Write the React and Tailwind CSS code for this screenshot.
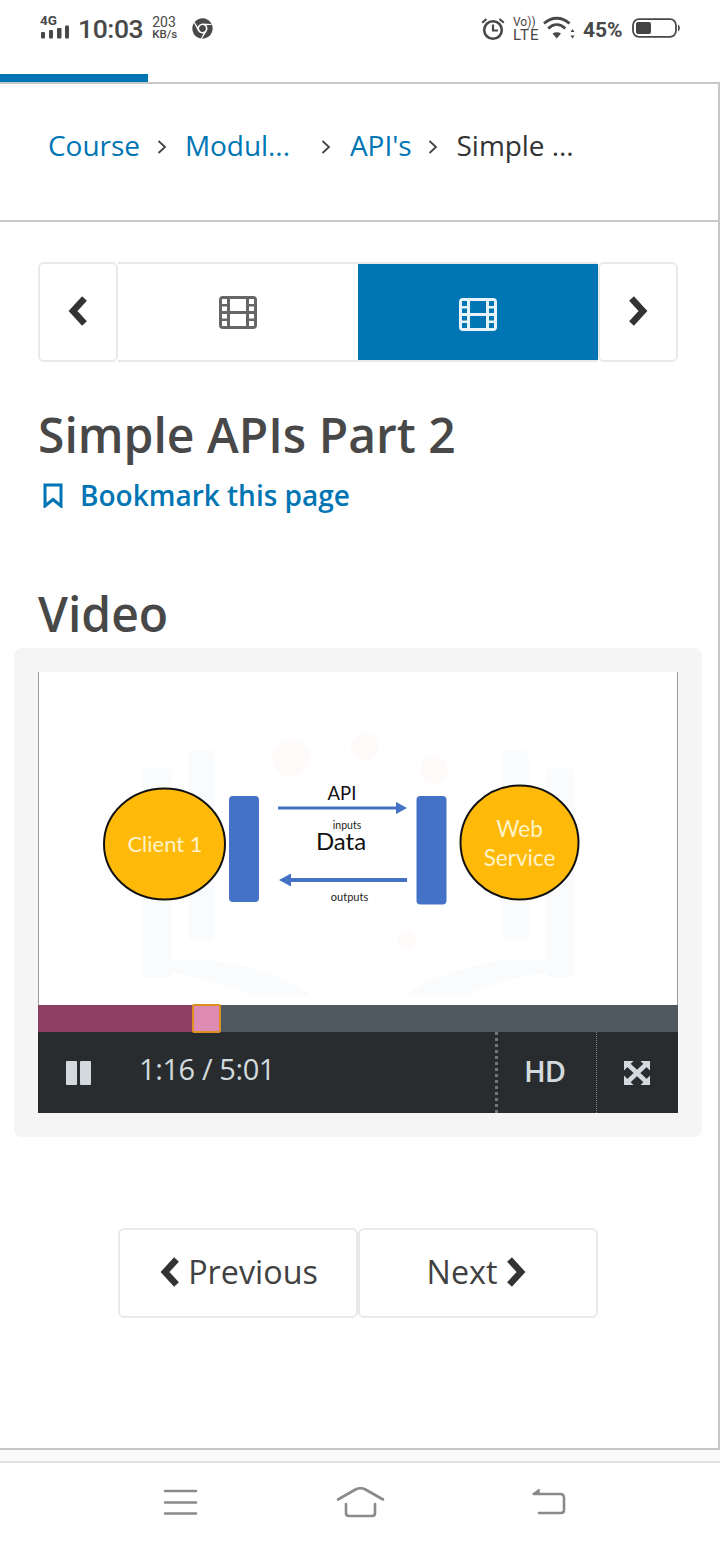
import React from "react";
import { FaChrome } from "react-icons/fa";

function Signal() {
  return (
    <svg width="30" height="14" viewBox="0 0 30 14" className="block">
      <rect x="1" y="7" width="4" height="6.500" rx="1" fill="#484848" />
      <rect x="9" y="5" width="4" height="8.500" rx="1" fill="#484848" />
      <rect x="17" y="3" width="4.500" height="10.500" rx="1" fill="#484848" />
      <rect x="25" y="0.500" width="4" height="13" rx="1" fill="#484848" />
    </svg>
  );
}

function Alarm() {
  return (
    <svg width="24" height="24" viewBox="0 0 24 24" fill="none" stroke="#484848" strokeWidth="2.600">
      <circle cx="12" cy="13" r="8.800" />
      <path d="M12 7.500v6h5" strokeWidth="2.200" />
      <path d="M1.200 5.800 5.500 2M22.800 5.800 18.500 2" strokeWidth="2.200" />
    </svg>
  );
}

function Wifi() {
  return (
    <svg width="32" height="24" viewBox="0 0 32 24" fill="none" stroke="#484848" strokeWidth="2.800">
      <path d="M1 7.500C8.500 0.500 19 0.500 26.500 7.500" />
      <path d="M5.200 12.500C10.500 7.300 17 7.300 22.300 12.500" />
      <path d="M9.500 17.500 13.750 22.500 18 17.500c-2.500-1.800-6-1.800-8.500 0z" fill="#484848" stroke="none" />
      <path d="M29.500 13 31.500 16h-4zM29.500 22.500 27.500 19.500h4z" fill="#484848" stroke="none" />
    </svg>
  );
}

function Battery() {
  return (
    <svg width="48" height="20" viewBox="0 0 48 20" fill="none">
      <rect x="1" y="1.200" width="43" height="17.600" rx="6" stroke="#484848" strokeWidth="1.800" />
      <rect x="4" y="4" width="15" height="12" rx="2" fill="#444" />
      <path d="M46 6.500c1.400.8 1.800 2 1.800 3.500s-.4 2.700-1.800 3.500z" fill="#484848" />
    </svg>
  );
}

function StatusBar() {
  return (
    <div className="flex h-[74px] items-start justify-between pt-[13px] pl-[40px] pr-[40px] text-[#484848] font-['Roboto',sans-serif]">
      <div className="flex items-start">
        <div className="flex w-[30px] flex-col">
          <span className="text-[13.500px] font-bold leading-[13px] h-[12px] mt-[1px]">4G</span>
          <span className="mt-[-1px]"><Signal /></span>
        </div>
        <span className="ml-[8px] mt-[1px] text-[26.500px] font-medium leading-[30px] tracking-[-0.4px]">10:03</span>
        <div className="ml-[9px] mt-[3px] flex flex-col">
          <span className="text-[14px] leading-[12px]">203</span>
          <span className="text-[11.500px] font-medium leading-[13px]">KB/s</span>
        </div>
        <FaChrome className="ml-[15px] mt-[5px] text-[21px] text-[#484848]" />
      </div>
      <div className="flex items-start">
        <span className="mt-[4px] h-[24px] w-[24px]"><Alarm /></span>
        <div className="ml-[8px] mt-[3px] flex w-[25px] flex-col">
          <span className="text-[12px] leading-[12px] h-[12px] whitespace-nowrap">Vo))</span>
          <span className="text-[15px] leading-[14px] tracking-[1px]">LTE</span>
        </div>
        <span className="ml-[5px] mt-[3px] h-[24px] w-[32px]"><Wifi /></span>
        <span className="ml-[8px] mt-[2px] w-[41px] whitespace-nowrap text-[21px] font-bold leading-[30px] text-[#484848]">45%</span>
        <span className="ml-[8px] mt-[5px] h-[20px] w-[48px]"><Battery /></span>
      </div>
    </div>
  );
}

function Crumb({ children, dark, className = "" }) {
  return <span className={`whitespace-nowrap ${dark ? "text-[#333]" : "text-[#0075b4]"} ${className}`}>{children}</span>;
}

function Sep({ className = "" }) {
  return (
    <svg width="10" height="16" viewBox="0 0 10 16" fill="none" stroke="#444" strokeWidth="1.800" className={className}>
      <path d="M1.500 2 8 8 1.500 14" />
    </svg>
  );
}

function Breadcrumbs() {
  return (
    <nav className="flex h-[136px] items-center pl-[48px] pb-[14px] text-[28px] leading-[38px] tracking-[-0.05px]">
      <Crumb>Course</Crumb>
      <Sep className="ml-[17px] mt-[4px]" />
      <Crumb className="ml-[18px]">Modul...</Crumb>
      <Sep className="ml-[31px] mt-[4px]" />
      <Crumb className="ml-[19px]">API's</Crumb>
      <Sep className="ml-[16px] mt-[4px]" />
      <Crumb dark className="ml-[19px]">Simple ...</Crumb>
    </nav>
  );
}

function Film({ color }) {
  return (
    <svg width="38" height="33" viewBox="0 0 38 33" className="block">
      <path
        fillRule="evenodd"
        fill={color}
        d="M4 0h30a4 4 0 0 1 4 4v25a4 4 0 0 1-4 4H4a4 4 0 0 1-4-4V4a4 4 0 0 1 4-4zM3 3v5h5V3zM3 10.500v4.500h5v-4.500zM3 18v4.500h5V18zM3 25v5h5v-5zM30 3v5h5V3zM30 10.500v4.500h5v-4.500zM30 18v4.500h5V18zM30 25v5h5v-5zM11 3v12h16V3zM11 18v12h16V18z"
      />
    </svg>
  );
}

function Chevron({ left, className = "" }) {
  return (
    <svg width="20" height="30" viewBox="0 0 20 30" fill="none" stroke="#333" strokeWidth="6.500" className={`block ${className}`}>
      <path d={left ? "M16.500 2.500 5 15l11.500 12.500" : "M3.500 2.500 15 15 3.500 27.500"} />
    </svg>
  );
}

function UnitNav() {
  return (
    <div className="flex h-[100px] w-[640px]">
      <div className="flex w-[80px] items-center justify-center rounded-[6px] border-2 border-[#e9e9e9] pb-[2px]">
        <Chevron left />
      </div>
      <div className="flex w-[240px] items-center justify-center border-y-2 border-[#e9e9e9] pt-[1px]">
        <Film color="#666" />
      </div>
      <div className="flex w-[240px] items-center justify-center border-y-2 border-[#e9e9e9] bg-[#0075b4] pt-[5px]">
        <Film color="#e6f3fa" />
      </div>
      <div className="flex w-[80px] items-center justify-center rounded-[6px] border-2 border-[#e9e9e9] pb-[2px]">
        <Chevron />
      </div>
    </div>
  );
}

function Diagram() {
  return (
    <svg viewBox="39 672 638 333" className="block h-[333px] w-full bg-white font-['Lato',sans-serif]">
      <g fill="#fafbfd">
        <rect x="142" y="768" width="30" height="210" rx="6" />
        <rect x="188" y="750" width="27" height="190" rx="6" />
        <rect x="502" y="750" width="27" height="190" rx="6" />
        <rect x="546" y="768" width="28" height="210" rx="6" />
        <path d="M142 960h70c40 6 80 20 100 36h-60c-30-14-70-24-110-26z" />
        <path d="M574 960h-70c-40 6-80 20-100 36h60c30-14 70-24 110-26z" />
      </g>
      <g fill="#fefafa">
        <circle cx="291" cy="758" r="19" />
        <circle cx="365" cy="747" r="14" />
        <circle cx="434" cy="770" r="14" />
        <circle cx="407" cy="940" r="10" />
      </g>
      <ellipse cx="164.500" cy="844" rx="60.500" ry="55.500" fill="#ffb908" stroke="#111" strokeWidth="2" />
      <ellipse cx="519.500" cy="842.500" rx="59" ry="57" fill="#ffb908" stroke="#111" strokeWidth="2" />
      <rect x="229" y="796" width="30" height="106" rx="4" fill="#4472c7" />
      <rect x="416.500" y="796" width="30" height="108.500" rx="4" fill="#4472c7" />
      <path d="M278 806.500h118v-4.500l11 6-11 6v-4.500h-118z" fill="#4472c4" />
      <path d="M407 878h-116v-4.500l-12 6.500 12 6.500v-4.500h116z" fill="#4472c4" />
      <g textAnchor="middle">
        <text x="165" y="852" fontSize="22" fill="#fff3c8">Client 1</text>
        <text x="519.500" y="837" fontSize="22.500" fill="#fff3c8">Web</text>
        <text x="519.500" y="866" fontSize="22.500" fill="#fff3c8">Service</text>
        <text x="342" y="800" fontSize="18.500" fill="#111">API</text>
        <text x="347" y="829" fontSize="10.500" fill="#222">inputs</text>
        <text x="341" y="850" fontSize="24" fill="#111">Data</text>
        <text x="349.500" y="901" fontSize="11" fill="#222">outputs</text>
      </g>
    </svg>
  );
}

function Player() {
  return (
    <div className="rounded-[8px] bg-[#f5f5f5] p-[24px]">
      <div className="border-x border-[#9a9a9a]">
        <Diagram />
      </div>
      <div className="relative flex h-[27px] bg-[#50595f]">
        <div className="h-full w-[154px] bg-[#8e3d63]" />
        <div className="absolute left-[154px] -top-[1px] h-[29px] w-[29px] rounded-[2px] border-2 border-[#dd8f22] bg-[#de8bb4]" />
      </div>
      <div className="flex h-[81px] items-stretch bg-[#282c2f] text-[#d2dade]">
        <div className="flex w-[80px] items-center justify-center">
          <svg width="25" height="24" viewBox="0 0 25 24" fill="#d2dade" className="block">
            <rect width="11" height="24" rx="1" />
            <rect x="14" width="11" height="24" rx="1" />
          </svg>
        </div>
        <div className="flex flex-1 items-center pl-[21px] pb-[8px] text-[29px] tracking-[-0.4px]">1:16 / 5:01</div>
        <div className="flex w-[101px] items-center justify-center border-l-[3px] border-dotted border-[#70767a] pr-[5px] pb-[4px] text-[29px] font-semibold tracking-[-1px]">HD</div>
        <div className="flex w-[82px] items-center justify-center border-l border-dotted border-[#80868a] pr-[1px]">
          <svg width="26" height="24" viewBox="0 0 26 24" className="block" fill="#d2dade">
            <path d="M0 0h9.500L0 9.500zM26 0h-9.500L26 9.500zM0 24h9.500L0 14.500zM26 24h-9.500L26 14.500z" />
            <path d="M4 3.500 22 20.500M22 3.500 4 20.500" stroke="#d2dade" strokeWidth="4.500" fill="none" />
          </svg>
        </div>
      </div>
    </div>
  );
}

function PageButtons() {
  return (
    <div className="flex pl-[118px]">
      <div className="flex h-[90px] w-[240px] items-center justify-center gap-[8px] rounded-[6px] border-2 border-[#e9e9e9] pl-[2px] pb-[3px] text-[32.300px] text-[#414141]">
        <Chevron left />
        Previous
      </div>
      <div className="flex h-[90px] w-[240px] items-center justify-center gap-[9px] rounded-[6px] border-2 border-[#e9e9e9] pr-[3px] pb-[3px] text-[32.300px] text-[#414141]">
        Next
        <Chevron />
      </div>
    </div>
  );
}

function SystemNav() {
  return (
    <div className="flex h-[83px] justify-center border-t-2 border-[#e2e2e2] bg-white">
      <svg width="720" height="81" viewBox="0 1463 720 81" fill="none" stroke="#8a8a8a" strokeWidth="2.600" strokeLinecap="round" strokeLinejoin="round">
        <path d="M165 1491h31M165 1502.500h31M165 1513.500h31" />
        <path d="M338 1499.500 355.500 1489.500q5-2.500 10 0L383 1499.500" />
        <path d="M346 1504v9q0 3 3 3h23q3 0 3-3v-9" />
        <path d="M534 1494h26q4 0 4 4v12q0 3-3 3h-22" />
        <path d="M533 1494 539 1489.500v4.500z" fill="#8a8a8a" strokeWidth="1.500" />
      </svg>
    </div>
  );
}

export default function App() {
  return (
    <div className="flex h-[1544px] w-[720px] flex-col overflow-hidden bg-white font-['Open_Sans',sans-serif]">
      <StatusBar />
      <div className="h-[8px] w-[148px] bg-[#0075b4]" />
      <main className="h-[1368px] border-y-2 border-r-2 border-[#c8c8c8]">
        <Breadcrumbs />
        <div className="border-t-2 border-[#c8c8c8] pt-[40px]">
          <div className="pl-[38px]">
            <UnitNav />
            <h1 className="mt-[40px] text-[48px] font-semibold leading-[65px] text-[#484848]">Simple APIs Part 2</h1>
            <div className="mt-[9px] flex items-center text-[#0075b4]">
              <svg width="22" height="25" viewBox="0 0 22 25" fill="none" stroke="#0075b4" strokeWidth="3" className="ml-[4px]">
                <path d="M3 2h16v21l-8-6.500L3 23z" />
              </svg>
              <span className="ml-[16px] text-[28px] font-semibold leading-[38px]">Bookmark this page</span>
            </div>
            <h2 className="mt-[68px] text-[48px] font-semibold leading-[63px] text-[#484848]">Video</h2>
          </div>
          <div className="ml-[14px] mt-[3px] w-[688px]">
            <Player />
          </div>
          <div className="mt-[91px]">
            <PageButtons />
          </div>
        </div>
      </main>
      <div className="h-[11px] bg-[#fafafa]" />
      <SystemNav />
    </div>
  );
}
